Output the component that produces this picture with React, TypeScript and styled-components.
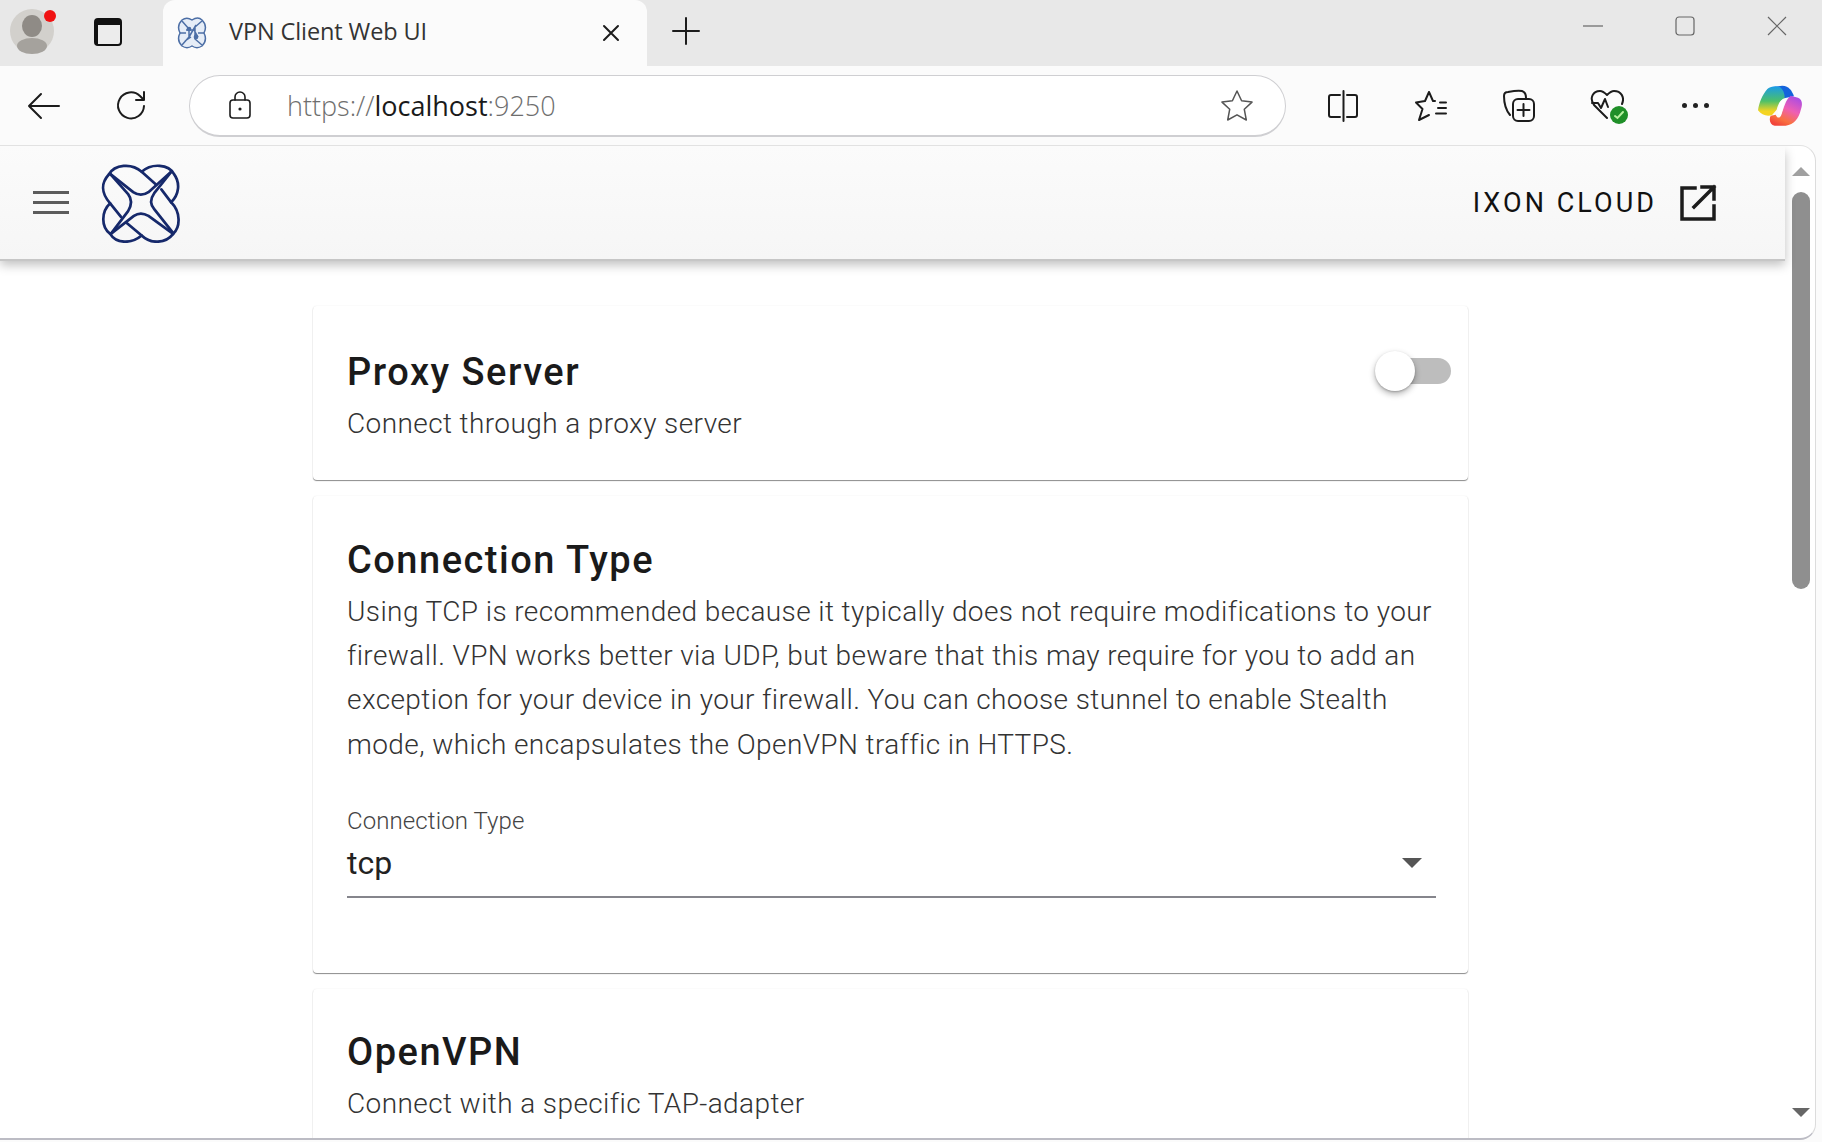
import React from 'react';
import styled, { createGlobalStyle } from 'styled-components';

const GlobalStyle = createGlobalStyle`
  html, body {
    margin: 0;
    padding: 0;
    overflow: hidden;
    background: #fbfbfb;
  }
  * {
    box-sizing: border-box;
  }
`;

const Stroke = styled.svg`
  display: block;
  fill: none;
  stroke: #1c1c1c;
  stroke-width: 2;
  stroke-linecap: round;
  stroke-linejoin: round;
`;

const KnotLogo = () => (
  <svg width="80" height="80" viewBox="68 36 230 236" fill="none" stroke="#16296b" strokeWidth="8" strokeLinejoin="round" strokeLinecap="round">
    <path d="M88 70C105 40 155 35 185 62C215 35 265 40 280 68C300 95 295 130 272 152C300 180 300 225 278 245C255 275 210 275 185 250C155 275 110 275 92 245C65 225 65 180 92 155C65 125 65 95 88 70Z" />
    <path d="M92 68L160 122C175 132 190 132 205 122L272 62" />
    <path d="M272 62L222 125C210 142 210 158 222 172L278 243" />
    <path d="M278 245L205 192C190 183 175 183 162 192L94 245" />
    <path d="M94 245L145 178C156 160 156 142 145 128L92 68" />
    <path d="M185 62L228 100M272 152L243 114M185 250L140 212M92 155L124 195" />
  </svg>
);

const Favicon = () => (
  <svg width="32" height="32" viewBox="0 0 32 32" fill="#e6edf7" stroke="#4d6fa6" strokeWidth="1.5">
    <path d="M6 3C10 0 13 1 16 3C19 1 23 0 26 3C30 7 30 12 28 16C30 20 30 25 26 29C23 31 19 31 16 29C13 31 9 31 6 29C2 25 2 20 4 16C2 12 2 7 6 3Z" />
    <path fill="none" d="M6 4L13 12V20L6 28M26 4L19 10V22L26 28M10 13H18L22 20M13 20L20 8M9 24L15 20M4 16H10M22 16H28" />
    <circle cx="13" cy="12" r="1.6" fill="#4d6fa6" />
    <circle cx="20" cy="20" r="1.6" fill="#4d6fa6" />
  </svg>
);

const Copilot = () => (
  <svg width="46" height="42" viewBox="50 16 136 126">
    <defs>
      <linearGradient id="copilotLeft" x1="0" y1="0" x2="0" y2="1">
        <stop offset="0" stopColor="#1a9be8" />
        <stop offset="0.5" stopColor="#4cc06a" />
        <stop offset="0.85" stopColor="#f4d422" />
      </linearGradient>
      <linearGradient id="copilotRight" x1="0.8" y1="0" x2="0.3" y2="1">
        <stop offset="0" stopColor="#a64be6" />
        <stop offset="0.45" stopColor="#ee5fb4" />
        <stop offset="0.8" stopColor="#f9713f" />
        <stop offset="1" stopColor="#f2453a" />
      </linearGradient>
    </defs>
    <path fill="#1463dc" d="M100 22L125 18C145 18 155 35 160 50L130 56Z" />
    <path fill="url(#copilotLeft)" d="M80 28C90 20 105 18 118 22C128 30 132 42 132 55C118 60 112 75 108 90L95 105C82 112 62 106 52 92C55 70 65 45 80 28Z" />
    <path fill="url(#copilotRight)" d="M150 48L172 54C186 60 186 75 180 92C175 115 160 136 135 138L102 138C88 135 84 120 90 108L105 105C110 116 116 116 121 108C130 85 134 60 150 48Z" />
    <path fill="#fff" d="M118 68C122 60 128 58 133 60L122 104C116 108 112 104 112 98Z" />
  </svg>
);

const ProfileIcon = () => (
  <svg width="44" height="46" viewBox="0 0 44 46">
    <circle cx="22" cy="23" r="22" fill="#d2d0cc" />
    <ellipse cx="22" cy="18" rx="10" ry="11" fill="#8f8b86" />
    <ellipse cx="22" cy="38" rx="15" ry="8" fill="#a5a29d" />
  </svg>
);

const tools = [
  <Stroke key="split" width="34" height="34" viewBox="0 0 34 34">
    <path d="M14 6H5a2 2 0 0 0-2 2v18a2 2 0 0 0 2 2h9M21 6h8a2 2 0 0 1 2 2v18a2 2 0 0 1-2 2h-8M17.500 2v30" />
  </Stroke>,
  <Stroke key="favourites" width="34" height="32" viewBox="0 0 34 32">
    <path d="M15 2l4 9h2M26 12.500h6M24 18h8M22 23.500h10M15 2l-4 9-9 1.500 6.500 6.500L5 30l10-5" />
  </Stroke>,
  <Stroke key="collections" width="34" height="34" viewBox="0 0 34 34">
    <path d="M8 26C3 20 2 11 2 7c0-3 2-4 4-4 5-1 10-2 14-1 3 1 4 3 4 7" />
    <rect x="11" y="10" width="21" height="22" rx="5" />
    <path d="M21.500 15v12M15.500 21h12" />
  </Stroke>,
];

const App = () => (
  <>
    <GlobalStyle />
    <Window>
      <TabStrip>
        <ProfileSlot>
          <ProfileIcon />
          <RedDot />
        </ProfileSlot>
        <SidebarIcon />
        <Tab>
          <Favicon />
          <TabTitle>VPN Client Web UI</TabTitle>
          <Stroke width="18" height="18" viewBox="0 0 18 18">
            <path d="M2 2l14 14M16 2L2 16" />
          </Stroke>
        </Tab>
        <NewTab>
          <Stroke width="30" height="30" viewBox="0 0 30 30">
            <path d="M15 2v26M2 15h26" />
          </Stroke>
        </NewTab>
        <WindowControls>
          <WindowStroke width="22" height="22" viewBox="0 0 22 22">
            <path d="M1 11h20" />
          </WindowStroke>
          <WindowStroke width="22" height="22" viewBox="0 0 22 22">
            <rect x="2" y="2" width="18" height="18" rx="3" />
          </WindowStroke>
          <WindowStroke width="22" height="22" viewBox="0 0 22 22">
            <path d="M2 2l18 18M20 2L2 20" />
          </WindowStroke>
        </WindowControls>
      </TabStrip>

      <Toolbar>
        <ToolSlot>
          <Stroke width="34" height="28" viewBox="0 0 34 28">
            <path d="M14 2L2 14l12 12M2 14h30" />
          </Stroke>
        </ToolSlot>
        <ToolSlot>
          <Stroke width="34" height="34" viewBox="0 0 34 34">
            <path d="M29 17a13 13 0 1 1-4-10l4 4M29 3v8h-8" />
          </Stroke>
        </ToolSlot>
        <AddressBar>
          <LockIcon width="24" height="30" viewBox="0 0 24 30">
            <rect x="2" y="10" width="20" height="18" rx="3" />
            <path d="M7 10V7a5 5 0 0 1 10 0v3" />
            <circle cx="12" cy="19" r="0.8" />
          </LockIcon>
          <Url>
            <UrlMuted>https://</UrlMuted>
            <UrlHost>localhost</UrlHost>
            <UrlMuted>:9250</UrlMuted>
          </Url>
          <StarIcon width="34" height="32" viewBox="0 0 34 32">
            <path d="M17 2l4.600 9.800 10.400 1.300-7.700 7.200 2 10.700L17 25.800 7.700 31l2-10.700L2 13.100l10.400-1.300z" />
          </StarIcon>
        </AddressBar>
        <ToolGroup>
          {tools.map((icon) => <ToolSlot key={icon.key}>{icon}</ToolSlot>)}
          <ToolSlot>
            <HeartWrap>
              <Stroke width="34" height="32" viewBox="0 0 34 32">
                <path d="M17 29L4 16C-1 9 3 2 10 2c3 0 5 2 7 4 2-2 4-4 7-4 7 0 11 6 8 13M2 14h6l3 5 4-9 3 8" />
              </Stroke>
              <HealthBadge>
                <svg width="12" height="12" viewBox="0 0 12 12" fill="none" stroke="#b8f0a0" strokeWidth="2" strokeLinecap="round">
                  <path d="M2 7l2.500 2L10 3" />
                </svg>
              </HealthBadge>
            </HeartWrap>
          </ToolSlot>
          <ToolSlot>
            <Dots>
              <Dot />
              <Dot />
              <Dot />
            </Dots>
          </ToolSlot>
          <CopilotSlot>
            <Copilot />
          </CopilotSlot>
        </ToolGroup>
      </Toolbar>

      <Page>
        <Main>
          <AppBar>
            <Hamburger>
              <span />
              <span />
              <span />
            </Hamburger>
            <KnotLogo />
            <CloudLink>
              <CloudLabel>IXON CLOUD</CloudLabel>
              <CloudIcon width="38" height="38" viewBox="0 0 38 38">
                <path d="M16 4H3v31h32V22M23 3h12v12M35 3L15 23" />
              </CloudIcon>
            </CloudLink>
          </AppBar>
          <Content>
            <ProxyCard>
              <CardHead>
                <div>
                  <CardTitle>Proxy Server</CardTitle>
                  <CardText>Connect through a proxy server</CardText>
                </div>
                <Toggle>
                  <ToggleKnob />
                </Toggle>
              </CardHead>
            </ProxyCard>
            <Card>
              <CardTitle>Connection Type</CardTitle>
              <CardText>
                Using TCP is recommended because it typically does not require modifications to your
                firewall. VPN works better via UDP, but beware that this may require for you to add an
                exception for your device in your firewall. You can choose stunnel to enable Stealth
                mode, which encapsulates the OpenVPN traffic in HTTPS.
              </CardText>
              <SelectField>
                <SelectLabel>Connection Type</SelectLabel>
                <SelectRow>
                  <SelectValue>tcp</SelectValue>
                  <SelectArrow />
                </SelectRow>
              </SelectField>
            </Card>
            <Card>
              <CardTitle>OpenVPN</CardTitle>
              <CardText>Connect with a specific TAP-adapter</CardText>
            </Card>
          </Content>
        </Main>
        <Rail>
          <RailArrow $dir="up" />
          <RailThumb />
          <RailArrow $dir="down" />
        </Rail>
      </Page>
    </Window>
  </>
);

const Window = styled.div`
  width: 1822px;
  height: 1142px;
  display: flex;
  flex-direction: column;
  background: #fbfbfb;
  overflow: hidden;
`;

const TabStrip = styled.div`
  height: 66px;
  flex: none;
  display: flex;
  align-items: flex-start;
  background: #e8e8e8;
`;

const ProfileSlot = styled.div`
  position: relative;
  width: 94px;
  padding: 8px 0 0 10px;
  flex: none;
`;

const RedDot = styled.span`
  position: absolute;
  left: 44px;
  top: 10px;
  width: 12px;
  height: 12px;
  border-radius: 50%;
  background: #f01212;
`;

const SidebarIcon = styled.div`
  width: 28px;
  height: 28px;
  margin-top: 18px;
  flex: none;
  border: 2px solid #111;
  border-top-width: 7px;
  border-radius: 4px;
  background: linear-gradient(to right, #111 0 2px, #ececec 2px);
`;

const Tab = styled.div`
  width: 484px;
  height: 66px;
  margin-left: 41px;
  flex: none;
  display: flex;
  align-items: center;
  padding: 0 27px 0 13px;
  border-radius: 12px 12px 0 0;
  background: #fbfbfb;
`;

const TabTitle = styled.span`
  margin: -4px 0 0 21px;
  flex: 1;
  font: 400 23.500px/30px 'Open Sans', sans-serif;
  letter-spacing: -0.1px;
  color: #333;
`;

const NewTab = styled.div`
  margin: 16px 0 0 24px;
`;

const WindowControls = styled.div`
  margin: 15px 34px 0 auto;
  display: flex;
  gap: 70px;
`;

const WindowStroke = styled.svg`
  display: block;
  fill: none;
  stroke: #666;
  stroke-width: 1.2;
`;

const Toolbar = styled.div`
  height: 79px;
  flex: none;
  display: flex;
  align-items: center;
  background: #fbfbfb;
`;

const ToolSlot = styled.div`
  width: 88px;
  flex: none;
  display: flex;
  align-items: center;
  justify-content: center;
`;

const CopilotSlot = styled(ToolSlot)`
  padding-right: 6px;
`;

const ToolGroup = styled.div`
  margin-left: 13px;
  display: flex;
`;

const AddressBar = styled.div`
  width: 1097px;
  height: 62px;
  margin-left: 13px;
  flex: none;
  display: flex;
  align-items: center;
  padding: 0 31px 0 38px;
  border: 1px solid #cfcfd2;
  border-bottom-width: 2px;
  border-radius: 31px;
  background: #fff;
`;

const LockIcon = styled(Stroke)`
  stroke-width: 1.6;
`;

const Url = styled.div`
  margin: 2px 0 0 35px;
  flex: 1;
  font: 400 27px/34px 'Open Sans', sans-serif;
  white-space: nowrap;
`;

const UrlMuted = styled.span`
  color: #6e6e6e;
  font-weight: 300;
`;

const UrlHost = styled.span`
  color: #1a1a1a;
`;

const StarIcon = styled(Stroke)`
  stroke: #555;
  stroke-width: 1.5;
`;

const HeartWrap = styled.div`
  position: relative;
  left: 1px;
  width: 36px;
  height: 34px;
`;

const HealthBadge = styled.span`
  position: absolute;
  right: -2px;
  bottom: -1px;
  width: 18px;
  height: 18px;
  display: flex;
  align-items: center;
  justify-content: center;
  border-radius: 50%;
  background: #1f8f28;
`;

const Dots = styled.div`
  display: flex;
  gap: 6px;
`;

const Dot = styled.span`
  width: 5px;
  height: 5px;
  border-radius: 50%;
  background: #222;
`;

const Page = styled.div`
  flex: 1;
  min-height: 0;
  margin: 0 6px 2px 0;
  display: flex;
  border-top: 1px solid #e2e2e2;
  border-right: 1px solid #dcdcdc;
  border-bottom: 2px solid #bcbcc4;
  border-radius: 0 16px 16px 0;
  background: #fff;
  overflow: hidden;
`;

const Main = styled.div`
  width: 1785px;
  flex: none;
  display: flex;
  flex-direction: column;
`;

const AppBar = styled.header`
  position: relative;
  height: 113px;
  flex: none;
  display: flex;
  align-items: center;
  padding: 0 68px 0 33px;
  background: linear-gradient(#fbfbfb, #f6f6f6);
  box-shadow: 0 2px 0 #c6c6c6, 0 6px 10px rgba(0, 0, 0, 0.25);
`;

const Hamburger = styled.div`
  width: 36px;
  height: 23px;
  margin-right: 32px;
  display: flex;
  flex-direction: column;
  justify-content: space-between;

  & > span {
    display: block;
    height: 3px;
    background: #5c5c5c;
  }
`;

const CloudLink = styled.div`
  margin-left: auto;
  display: flex;
  align-items: center;
  gap: 22px;
`;

const CloudIcon = styled(Stroke)`
  stroke-width: 3.5;
  stroke-linecap: square;
  stroke-linejoin: miter;
`;

const CloudLabel = styled.span`
  font: 400 27px/32px Roboto, sans-serif;
  letter-spacing: 3.050px;
  color: #111;
`;

const Content = styled.div`
  flex: 1;
  min-height: 0;
  padding: 47px 0 0 313px;
  display: flex;
  flex-direction: column;
  gap: 16px;
  overflow: hidden;
`;

const Card = styled.section`
  width: 1155px;
  flex: none;
  padding: 38.500px 28px 34px 34px;
  border-radius: 4px;
  background: #fff;
  box-shadow: 0 1px 1px rgba(0, 0, 0, 0.45), 0 0 2px rgba(0, 0, 0, 0.07);
`;

const ProxyCard = styled(Card)`
  padding-top: 41px;
`;

const CardHead = styled.div`
  display: flex;
  justify-content: space-between;
  align-items: flex-start;
`;

const CardTitle = styled.h2`
  margin: 0 0 5px;
  font: 500 38px/50px Roboto, sans-serif;
  letter-spacing: 1.500px;
  color: #1a1a1a;
`;

const CardText = styled.p`
  margin: 0;
  font: 300 28px/44.300px Roboto, sans-serif;
  letter-spacing: 0.400px;
  color: #333;
`;

const Toggle = styled.div`
  position: relative;
  width: 56px;
  height: 26px;
  margin: 0 -11px 0 0;
  top: 11px;
  border-radius: 13px;
  background: #bdbdbd;
`;

const ToggleKnob = styled.span`
  position: absolute;
  left: -20px;
  top: -7px;
  width: 40px;
  height: 40px;
  border-radius: 50%;
  background: #fff;
  box-shadow: 0 3px 6px rgba(0, 0, 0, 0.3), 0 1px 2px rgba(0, 0, 0, 0.2);
`;

const SelectField = styled.div`
  margin: 39px 0 41px;
  width: 1089px;
  border-bottom: 2px solid #85858c;
`;

const SelectLabel = styled.div`
  font: 300 24px/30px Roboto, sans-serif;
  letter-spacing: 0.100px;
  color: #444;
`;

const SelectRow = styled.div`
  height: 60px;
  display: flex;
  align-items: center;
  justify-content: space-between;
  padding: 0 14px 5px 0;
`;

const SelectValue = styled.span`
  font: 400 32px/40px Roboto, sans-serif;
  color: #222;
`;

const SelectArrow = styled.span`
  width: 0;
  height: 0;
  border-left: 10px solid transparent;
  border-right: 10px solid transparent;
  border-top: 10px solid #555;
`;

const Rail = styled.div`
  flex: 1;
  display: flex;
  flex-direction: column;
  align-items: center;
  padding: 21px 0 21px 2px;
`;

const RailArrow = styled.span<{ $dir: 'up' | 'down' }>`
  width: 0;
  height: 0;
  border-left: 9px solid transparent;
  border-right: 9px solid transparent;
  ${({ $dir }) => ($dir === 'up' ? 'border-bottom: 9px solid #a0a0a0;' : 'border-top: 9px solid #666; margin-top: auto;')}
`;

const RailThumb = styled.div`
  width: 18px;
  height: 397px;
  margin-top: 16px;
  border-radius: 9px;
  background: #8f8f8f;
`;

export default App;
